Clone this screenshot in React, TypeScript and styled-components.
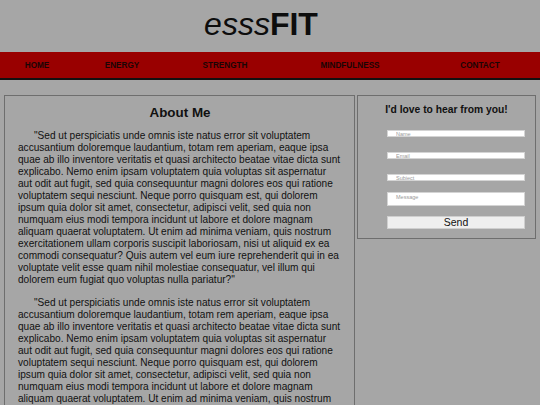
import React from "react";
import styled, { createGlobalStyle } from "styled-components";

const GlobalStyle = createGlobalStyle`
  html, body {
    margin: 0;
    padding: 0;
    background: #a6a6a6;
    font-family: "Liberation Sans", Arial, sans-serif;
    color: #111;
  }
`;

const Header = styled.header`
  height: 52px;
  display: flex;
  align-items: flex-start;
  justify-content: center;
`;

const Logo = styled.h1`
  margin: 6px 18px 0 0;
  font-size: 32px;
  font-weight: normal;
  line-height: 37px;
  color: #0d0d0d;

  em {
    font-style: italic;
  }

  strong {
    font-weight: bold;
  }
`;

const NavBar = styled.nav`
  height: 26px;
  background: #990000;
  border-bottom: 2px solid #141010;
  display: grid;
  grid-template-columns: 74px 96px 110px 140px 120px;
  align-items: center;
`;

const NavLink = styled.a`
  text-align: center;
  font-size: 8.2px;
  font-weight: bold;
  color: #1a0505;
  text-decoration: none;
  cursor: pointer;
`;

const Main = styled.main`
  display: flex;
  align-items: flex-start;
  gap: 2px;
  padding: 15px 4px 0;
`;

const Panel = styled.section<{ $width: number }>`
  box-sizing: border-box;
  width: ${(p) => p.$width}px;
  flex-shrink: 0;
  border: 1px solid #6e6e6e;
`;

const AboutPanel = styled(Panel)`
  padding: 0 12px 0 13px;
`;

const AboutTitle = styled.h2`
  margin: 9px 0 0;
  text-align: center;
  font-size: 13.4px;
  line-height: 15px;
  font-weight: bold;
`;

const Paragraph = styled.p`
  margin: 10px 0;
  font-size: 10.1px;
  line-height: 12px;
  text-indent: 16px;

  & + & {
    margin-top: 11px;
  }
`;

const ContactPanel = styled(Panel)`
  padding: 8px 10px 9px 29px;
`;

const ContactTitle = styled.h3`
  margin: 0 0 14px -19px;
  text-align: center;
  font-size: 10.3px;
  line-height: 12px;
  font-weight: bold;
`;

const Form = styled.form`
  display: flex;
  flex-direction: column;
`;

const Field = styled.input<{ $after: number }>`
  box-sizing: border-box;
  width: 138px;
  height: 7px;
  margin: 0 0 ${(p) => p.$after}px;
  padding: 0 0 0 8px;
  border: 1px solid #d4d4d4;
  background: #fff;
  font-family: inherit;
  font-size: 5.5px;
  outline: none;

  &::placeholder {
    color: #9a9a9a;
  }
`;

const MessageField = styled.textarea`
  box-sizing: border-box;
  width: 138px;
  height: 14px;
  margin: 0 0 10px;
  padding: 1px 0 0 8px;
  border: 1px solid #d4d4d4;
  background: #fff;
  font-family: inherit;
  font-size: 5.5px;
  resize: none;
  outline: none;

  &::placeholder {
    color: #9a9a9a;
  }
`;

const SendButton = styled.button`
  box-sizing: border-box;
  width: 138px;
  height: 13px;
  padding: 0;
  border: 1px solid #cfcfcf;
  background: #efefef;
  font-family: inherit;
  font-size: 10.5px;
  line-height: 11px;
  color: #111;
  cursor: pointer;
`;

const links = ["HOME", "ENERGY", "STRENGTH", "MINDFULNESS", "CONTACT"];

const lorem =
  "\"Sed ut perspiciatis unde omnis iste natus error sit voluptatem accusantium doloremque laudantium, totam rem aperiam, eaque ipsa quae ab illo inventore veritatis et quasi architecto beatae vitae dicta sunt explicabo. Nemo enim ipsam voluptatem quia voluptas sit aspernatur aut odit aut fugit, sed quia consequuntur magni dolores eos qui ratione voluptatem sequi nesciunt. Neque porro quisquam est, qui dolorem ipsum quia dolor sit amet, consectetur, adipisci velit, sed quia non numquam eius modi tempora incidunt ut labore et dolore magnam aliquam quaerat voluptatem. Ut enim ad minima veniam, quis nostrum exercitationem ullam corporis suscipit laboriosam, nisi ut aliquid ex ea commodi consequatur? Quis autem vel eum iure reprehenderit qui in ea voluptate velit esse quam nihil molestiae consequatur, vel illum qui dolorem eum fugiat quo voluptas nulla pariatur?\"";

export default function App() {
  return (
    <>
      <GlobalStyle />
      <Header>
        <Logo>
          <em>esss</em>
          <strong>FIT</strong>
        </Logo>
      </Header>
      <NavBar>
        {links.map((l) => (
          <NavLink key={l}>{l}</NavLink>
        ))}
      </NavBar>
      <Main>
        <AboutPanel $width={351}>
          <AboutTitle>About Me</AboutTitle>
          <Paragraph>{lorem}</Paragraph>
          <Paragraph>{lorem}</Paragraph>
        </AboutPanel>
        <ContactPanel $width={179}>
          <ContactTitle>I'd love to hear from you!</ContactTitle>
          <Form onSubmit={(e) => e.preventDefault()}>
            <Field $after={15} placeholder="Name" />
            <Field $after={15} placeholder="Email" />
            <Field $after={11} placeholder="Subject" />
            <MessageField placeholder="Message" />
            <SendButton type="submit">Send</SendButton>
          </Form>
        </ContactPanel>
      </Main>
    </>
  );
}
